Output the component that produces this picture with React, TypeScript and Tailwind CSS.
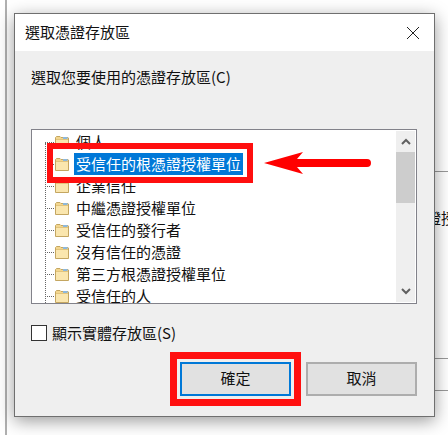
import { useState } from "react";

const stores = [
  "個人",
  "受信任的根憑證授權單位",
  "企業信任",
  "中繼憑證授權單位",
  "受信任的發行者",
  "沒有信任的憑證",
  "第三方根憑證授權單位",
  "受信任的人",
];

const FolderIcon = () => (
  <svg width="14" height="13" viewBox="0 0 14 13" className="shrink-0">
    <path d="M.5 12.5V1.5l1-1h3.5l1 1h7l.5.5v10.5z" fill="#f3d68e" stroke="#c4a661" />
    <path d="M8 1h4.5v2H8z" fill="#8db8dc" />
    <path d="M1 4h12v8H1z" fill="#fae6ae" />
    <path d="M1 3.5h12" stroke="#e2c47c" />
  </svg>
);

const Chevron = ({ up }: { up?: boolean }) => (
  <svg width="10" height="7" viewBox="0 0 10 7">
    <path d={up ? "M1 6l4-4 4 4" : "M1 1l4 4 4-4"} fill="none" stroke="#606060" strokeWidth="2" />
  </svg>
);

const App = () => {
  const [selected] = useState(1);

  return (
    <div className="relative h-[435px] w-[448px] overflow-hidden bg-white font-['Noto_Sans_CJK_TC','Noto_Sans',sans-serif] text-[15px] text-[#111]">
      {/* Window behind */}
      <div className="absolute left-[5px] top-0 h-full w-[2px] bg-[#b0b0b0]" />
      <div className="absolute left-[435px] top-[171px] h-px w-[13px] bg-[#999]" />
      <div className="absolute left-[435px] top-[358px] h-px w-[13px] bg-[#999]" />
      <div className="absolute left-[435px] top-[390px] h-px w-[13px] bg-[#999]" />
      <span className="absolute left-[426px] top-[208px] whitespace-nowrap leading-5">證授</span>

      {/* Dialog */}
      <div className="absolute left-[14px] top-[13px] flex h-[404px] w-[421px] flex-col border border-[#6f6f6f] bg-[#efefef] shadow-[0_4px_16px_rgba(0,0,0,0.4)]">
        <header className="flex h-[37px] items-center justify-between bg-white pl-[10px] pr-[14px]">
          <h1 className="pb-px font-normal">選取憑證存放區</h1>
          <svg width="14" height="14" viewBox="0 0 14 14">
            <path d="M1 1l12 12M13 1L1 13" stroke="#222" strokeWidth="1" fill="none" />
          </svg>
        </header>

        <div className="flex flex-1 flex-col pl-[16px] pr-[17px]">
          <p className="mt-[16px] leading-5">選取您要使用的憑證存放區(C)</p>

          {/* Store list */}
          <div className="mt-[42px] flex h-[175px] w-[386px] border border-[#82828a] bg-white">
            <div className="relative flex-1 overflow-hidden">
              <div className="absolute bottom-0 left-[13px] top-[13px] border-l border-dotted border-[#666]" />
              <ul className="mt-px pl-[13px]">
                {stores.map((store, i) => (
                  <li key={store} className="flex h-[22px] items-center">
                    <span className="mr-px w-[9px] border-t border-dotted border-[#666]" />
                    <FolderIcon />
                    <span
                      className={
                        i === selected
                          ? "ml-[5px] bg-[#0078d7] px-[2px] leading-[22px] whitespace-nowrap text-white"
                          : "ml-[7px] whitespace-nowrap"
                      }
                    >
                      {store}
                    </span>
                  </li>
                ))}
              </ul>
              {/* Callout box */}
              <div className="absolute left-[15px] top-[13px] h-[40px] w-[206px] border-[6px] border-[#ff0f0f]" />
              {/* Callout arrow */}
              <svg width="108" height="24" viewBox="0 0 108 24" className="absolute left-[232px] top-[21px]">
                <path d="M0 12L39 1l-6 7h70a4 4 0 0 1 0 8H33l6 7z" fill="#ff0000" />
              </svg>
            </div>
            <div className="my-px mr-px flex w-[19px] flex-col bg-[#efefef]">
              <div className="flex h-[21px] items-center justify-center">
                <Chevron up />
              </div>
              <div className="h-[51px] bg-[#cdcdcd]" />
              <div className="flex-1" />
              <div className="flex h-[21px] items-center justify-center">
                <Chevron />
              </div>
            </div>
          </div>

          <label className="mt-[18px] flex items-center gap-[5px]">
            <span className="h-[16px] w-[16px] border border-[#333] bg-white" />
            顯示實體存放區(S)
          </label>

          <div className="mt-[17px] flex justify-end gap-[15px]">
            <button className="relative h-[34px] w-[111px] border-2 border-[#0078d7] bg-[#e1e1e1]">
              確定
              <span className="absolute -inset-[12px] border-[7px] border-[#ff0f0f]" />
            </button>
            <button className="h-[34px] w-[111px] border-2 border-[#adadad] bg-[#e1e1e1]">取消</button>
          </div>
        </div>
      </div>
    </div>
  );
};

export default App;
